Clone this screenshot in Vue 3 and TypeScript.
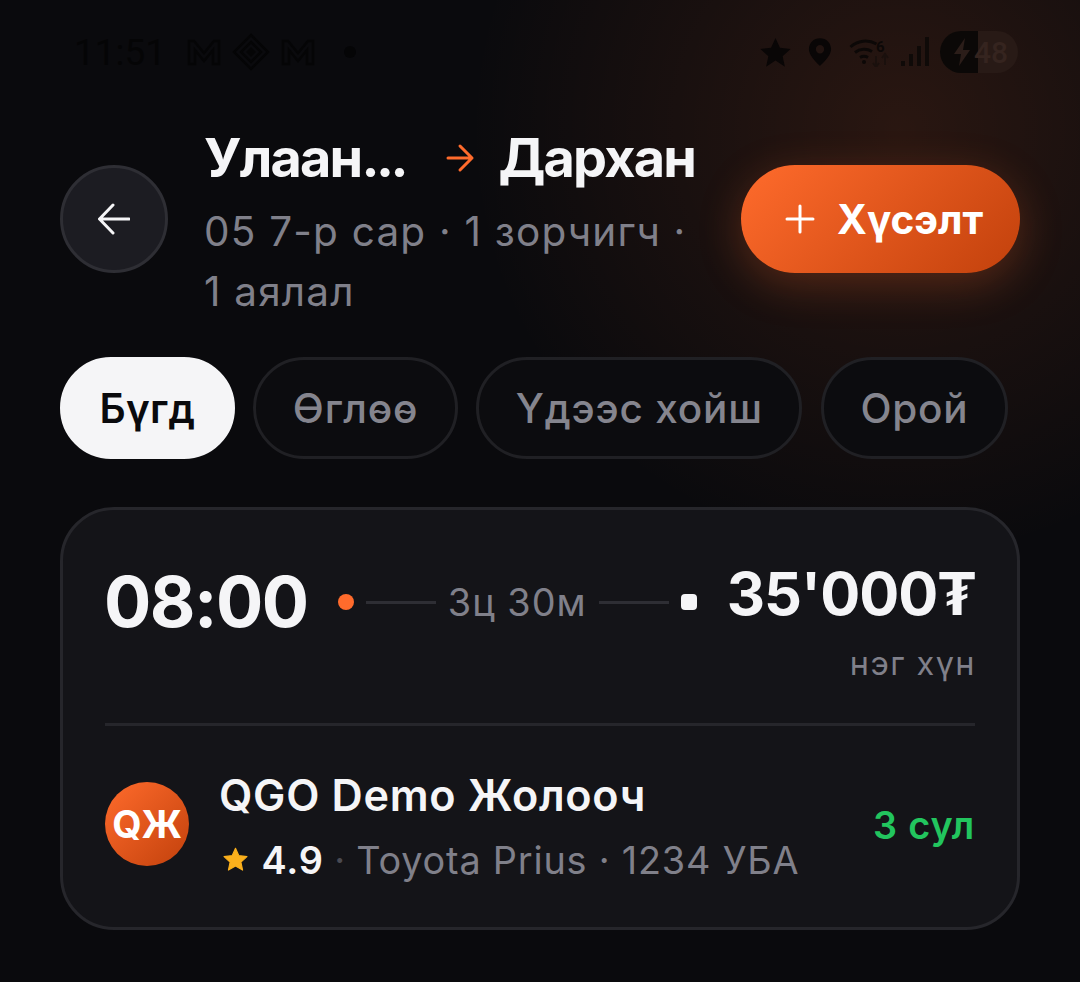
<template>
  <div class="screen">
    <!-- Status bar -->
    <div class="status-bar">
      <div class="status-left">
        <span class="clock">11:51</span>
        <svg class="notif" viewBox="0 0 36 30" width="36" height="30">
          <path d="M3 27V4h5l10 12L28 4h5v23h-6V13l-9 11-9-11v14z" fill="none" stroke="#050506" stroke-width="2.5" />
        </svg>
        <svg class="notif diamond" viewBox="0 0 38 38" width="38" height="38">
          <path d="M19 2l17 17-17 17L2 19z" fill="none" stroke="#050506" stroke-width="2.5" />
          <path d="M19 9l10 10-10 10L9 19z" fill="none" stroke="#050506" stroke-width="2.5" />
          <path d="M19 14l5 5-5 5-5-5z" fill="#050506" />
        </svg>
        <svg class="notif" viewBox="0 0 36 30" width="36" height="30">
          <path d="M3 27V4h5l10 12L28 4h5v23h-6V13l-9 11-9-11v14z" fill="none" stroke="#050506" stroke-width="2.5" />
        </svg>
        <span class="notif-dot"></span>
      </div>
      <div class="status-right">
        <svg class="ic-star" viewBox="0 0 32 32" width="31" height="31">
          <path d="M16 1l4.600 10.200 11 1.200-8.200 7.400 2.300 10.900L16 24.200 6.300 30.700l2.300-10.900L.4 12.400l11-1.200z" fill="#090606" />
        </svg>
        <svg class="ic-pin" viewBox="0 0 26 32" width="24" height="30">
          <path fill-rule="evenodd" d="M13 1C6 1 1 6.300 1 13c0 8 12 18 12 18s12-10 12-18C25 6.300 20 1 13 1zm0 7.500a4.500 4.500 0 1 1 0 9 4.500 4.500 0 0 1 0-9z" fill="#090606" />
        </svg>
        <svg class="ic-wifi" viewBox="0 0 42 30" width="42" height="30">
          <path d="M1.500 10a22 22 0 0 1 26-3M6 15.500a15 15 0 0 1 17-1M11 20.500a8 8 0 0 1 8 0" fill="none" stroke="#0c0807" stroke-width="3" />
          <circle cx="15" cy="25" r="2" fill="#0c0807" />
          <path d="M27 19v11M24 26l3 4 3-4M36 28V17M33 21l3-4 3 4" fill="none" stroke="#1a100d" stroke-width="2" />
          <text x="27" y="15" class="wifi-six">6</text>
        </svg>
        <svg class="ic-signal" viewBox="0 0 28 30" width="28" height="30">
          <path d="M0 24h4v5H0zM8 17h4v12H8zM16 9h4v20h-4zM24 0h4v29h-4z" fill="#0f0a08" />
        </svg>
        <div class="battery">
          <span class="battery-fill">
            <svg viewBox="0 0 20 30" width="20" height="30">
              <path d="M13 1L2 17h7l-2 12 11-16h-7z" fill="#2b1d19" />
            </svg>
          </span>
          <span class="battery-text">48</span>
        </div>
      </div>
    </div>

    <!-- Header -->
    <header class="header">
      <button class="back-btn" aria-label="Back">
        <svg viewBox="0 0 32 32" width="32" height="32">
          <path d="M31 16H2M15 2L1.500 16l13.500 14" fill="none" stroke="#f5f5f7" stroke-width="3" stroke-linecap="round" stroke-linejoin="round" />
        </svg>
      </button>
      <div class="route-info">
        <div class="route-title">
          <span class="city from">Улаан<span class="dots">...</span></span>
          <svg class="route-arrow" viewBox="0 0 32 32" width="32" height="32">
            <path d="M4 16h24M16 4l12 12-12 12" fill="none" stroke="#ff6b2c" stroke-width="3" stroke-linecap="round" stroke-linejoin="round" />
          </svg>
          <span class="city">Дархан</span>
        </div>
        <p class="route-sub">05 7-р сар · 1 зорчигч · 1 аялал</p>
      </div>
      <button class="request-btn">
        <svg viewBox="0 0 30 30" width="30" height="30">
          <path d="M15 2v26M2 15h26" fill="none" stroke="#fff" stroke-width="3" stroke-linecap="round" />
        </svg>
        <span>Хүсэлт</span>
      </button>
    </header>

    <!-- Time filter -->
    <nav class="chips">
      <button
        v-for="(chip, i) in chips"
        :key="chip"
        class="chip"
        :class="{ active: i === 0 }"
      >
        {{ chip }}
      </button>
    </nav>

    <!-- Trip card -->
    <section class="card">
      <div class="trip-top">
        <span class="depart">08:00</span>
        <div class="route-line">
          <span class="dot"></span>
          <span class="line"></span>
          <span class="duration">3ц 30м</span>
          <span class="line"></span>
          <span class="square"></span>
        </div>
        <div class="price-box">
          <span class="price">35'000₮</span>
          <span class="per">нэг хүн</span>
        </div>
      </div>
      <div class="driver-row">
        <div class="avatar">QЖ</div>
        <div class="driver-info">
          <div class="driver-name">QGO Demo Жолооч</div>
          <div class="driver-meta">
            <svg class="meta-star" viewBox="0 0 24 24" width="27" height="27">
              <path d="M12 2l3 6.600 7.200.8-5.400 4.900 1.500 7.100L12 17.800l-6.300 3.600 1.500-7.100L1.800 9.400 9 8.600z" fill="#fbb01c" stroke="#fbb01c" stroke-width="1" stroke-linejoin="round" />
            </svg>
            <span class="rating">4.9</span>
            <span class="sep">·</span>
            <span>Toyota Prius · 1234 УБА</span>
          </div>
        </div>
        <span class="seats">3 сул</span>
      </div>
    </section>
  </div>
</template>

<script setup lang="ts">
const chips: string[] = ["Бүгд", "Өглөө", "Үдээс хойш", "Орой"];
</script>

<style>
html,
body {
  background: #0a0a0d;
}
</style>

<style scoped>
.screen {
  height: 982px;
  box-sizing: border-box;
  overflow: hidden;
  padding: 0 60px;
  font-family: Inter, "Noto Sans", sans-serif;
  font-optical-sizing: none;
  background:
    radial-gradient(circle 430px at 900px 130px, rgba(255, 107, 44, 0.13), rgba(255, 107, 44, 0) 100%),
    #0a0a0d;
  color: #f5f5f7;
}

button {
  font-family: inherit;
  font-optical-sizing: none;
  cursor: pointer;
}

/* Status bar */
.status-bar {
  height: 104px;
  display: flex;
  align-items: center;
  justify-content: space-between;
  padding: 0 2px 0 14px;
}

.status-left,
.status-right {
  display: flex;
  align-items: center;
}

.status-left {
  gap: 10px;
}

.clock {
  font-family: Roboto, sans-serif;
  font-size: 37px;
  color: #050506;
  margin-right: 10px;
}

.notif-dot {
  width: 12px;
  height: 12px;
  border-radius: 50%;
  background: #050506;
  margin-left: 18px;
}

.ic-pin {
  margin-left: 17px;
}

.ic-wifi {
  margin-left: 17px;
}

.ic-signal {
  margin-left: 10px;
}

.wifi-six {
  font-family: Roboto, sans-serif;
  font-size: 15px;
  font-weight: 700;
  fill: #0c0807;
}

.battery {
  margin-left: 11px;
  width: 78px;
  height: 42px;
  border-radius: 21px;
  background: #281a16;
  overflow: hidden;
  display: flex;
  align-items: center;
}

.battery-fill {
  width: 38px;
  height: 42px;
  background: #0b0807;
  display: flex;
  align-items: center;
  justify-content: center;
  padding-left: 6px;
  box-sizing: border-box;
}

.battery-text {
  font-family: Roboto, sans-serif;
  font-size: 30px;
  font-weight: 500;
  color: #35241f;
  margin-left: -4px;
}

/* Header */
.header {
  height: 230px;
  display: flex;
  align-items: center;
  margin-bottom: 23px;
}

.back-btn {
  flex: none;
  width: 108px;
  height: 108px;
  border-radius: 50%;
  background: #1c1c22;
  border: 3px solid #2e2e34;
  display: flex;
  align-items: center;
  justify-content: center;
  padding: 0;
}

.route-info {
  flex: 1;
  min-width: 0;
  margin: 0 46px 0 36px;
  padding-top: 9px;
}

.route-title {
  display: flex;
  align-items: center;
  gap: 22px;
}

.city {
  font-size: 54px;
  font-weight: 700;
  line-height: 66px;
  white-space: nowrap;
  letter-spacing: -1.800px;
}

.from {
  flex: 1;
  min-width: 0;
}

.dots {
  letter-spacing: -3.500px;
}

.route-arrow {
  flex: none;
}

.route-sub {
  margin: 11px 0 0;
  font-size: 40.500px;
  line-height: 60px;
  letter-spacing: 1.200px;
  color: #80808a;
}

.request-btn {
  flex: none;
  width: 279px;
  height: 108px;
  border: none;
  border-radius: 54px;
  background: linear-gradient(135deg, #ff6b2c 0%, #c2410c 100%);
  box-shadow: 0 11px 43px rgba(255, 107, 44, 0.25);
  color: #fff;
  font-size: 40.500px;
  font-weight: 700;
  display: flex;
  align-items: center;
  gap: 22px;
  padding: 0 0 0 44px;
}

/* Chips */
.chips {
  display: flex;
  gap: 18.500px;
  margin-bottom: 48px;
}

.chip {
  height: 102px;
  padding: 0 36.500px;
  border-radius: 51px;
  border: 3px solid #202024;
  background: #0c0c0f;
  color: #85858e;
  font-size: 40.500px;
  font-weight: 500;
  letter-spacing: 0.800px;
  white-space: nowrap;
}

.chip.active {
  background: #f5f5f7;
  border-color: #f5f5f7;
  color: #0a0a0d;
  font-weight: 600;
  letter-spacing: 0.300px;
}

/* Card */
.card {
  box-sizing: border-box;
  height: 423px;
  padding: 0 42px;
  border: 3px solid #26262b;
  border-radius: 54px;
  background: #141418;
  display: flex;
  flex-direction: column;
}

.trip-top {
  display: flex;
  align-items: flex-start;
  justify-content: space-between;
  height: 216px;
  padding-top: 50px;
  box-sizing: border-box;
  border-bottom: 3px solid #26262b;
}

.depart {
  margin-left: -1px;
  font-size: 70.200px;
  font-weight: 700;
  line-height: 84px;
  letter-spacing: -1.500px;
}

.route-line {
  display: flex;
  align-items: center;
  gap: 12px;
  height: 84px;
  color: #80808a;
  font-size: 37.800px;
  letter-spacing: 1px;
}

.dot {
  width: 16px;
  height: 16px;
  border-radius: 50%;
  background: #ff6b2c;
}

.square {
  width: 16px;
  height: 16px;
  border-radius: 4px;
  background: #f5f5f7;
}

.line {
  width: 70px;
  height: 3px;
  background: #2e2e34;
}

.price-box {
  display: flex;
  flex-direction: column;
  align-items: flex-end;
  margin-right: -1px;
}

.price {
  font-size: 59.400px;
  font-weight: 700;
  line-height: 66px;
  letter-spacing: -1px;
}

.per {
  margin-top: 18px;
  font-size: 32.400px;
  line-height: 40px;
  letter-spacing: 1.500px;
  color: #80808a;
}

.driver-row {
  flex: 1;
  display: flex;
  align-items: center;
  gap: 30px;
  padding-bottom: 6px;
}

.avatar {
  flex: none;
  width: 84px;
  height: 84px;
  border-radius: 50%;
  background: linear-gradient(135deg, #ff6b2c 0%, #c2410c 100%);
  color: #fff;
  font-size: 37.800px;
  font-weight: 700;
  display: flex;
  align-items: center;
  justify-content: center;
}

.driver-info {
  flex: 1;
  min-width: 0;
  padding-top: 4px;
}

.driver-name {
  font-size: 43.200px;
  font-weight: 600;
  line-height: 50px;
  letter-spacing: 0.700px;
}

.driver-meta {
  margin-top: 18px;
  display: flex;
  align-items: center;
  gap: 10.500px;
  font-size: 37.800px;
  line-height: 44px;
  letter-spacing: 0.800px;
  color: #80808a;
}

.meta-star {
  margin-left: 3px;
}

.rating {
  margin-left: 2px;
  color: #f5f5f7;
  font-weight: 600;
}

.sep {
  color: #4a4a52;
}

.seats {
  flex: none;
  padding-top: 2px;
  color: #22c55e;
  font-size: 37.800px;
  font-weight: 600;
  letter-spacing: 0.800px;
}
</style>
